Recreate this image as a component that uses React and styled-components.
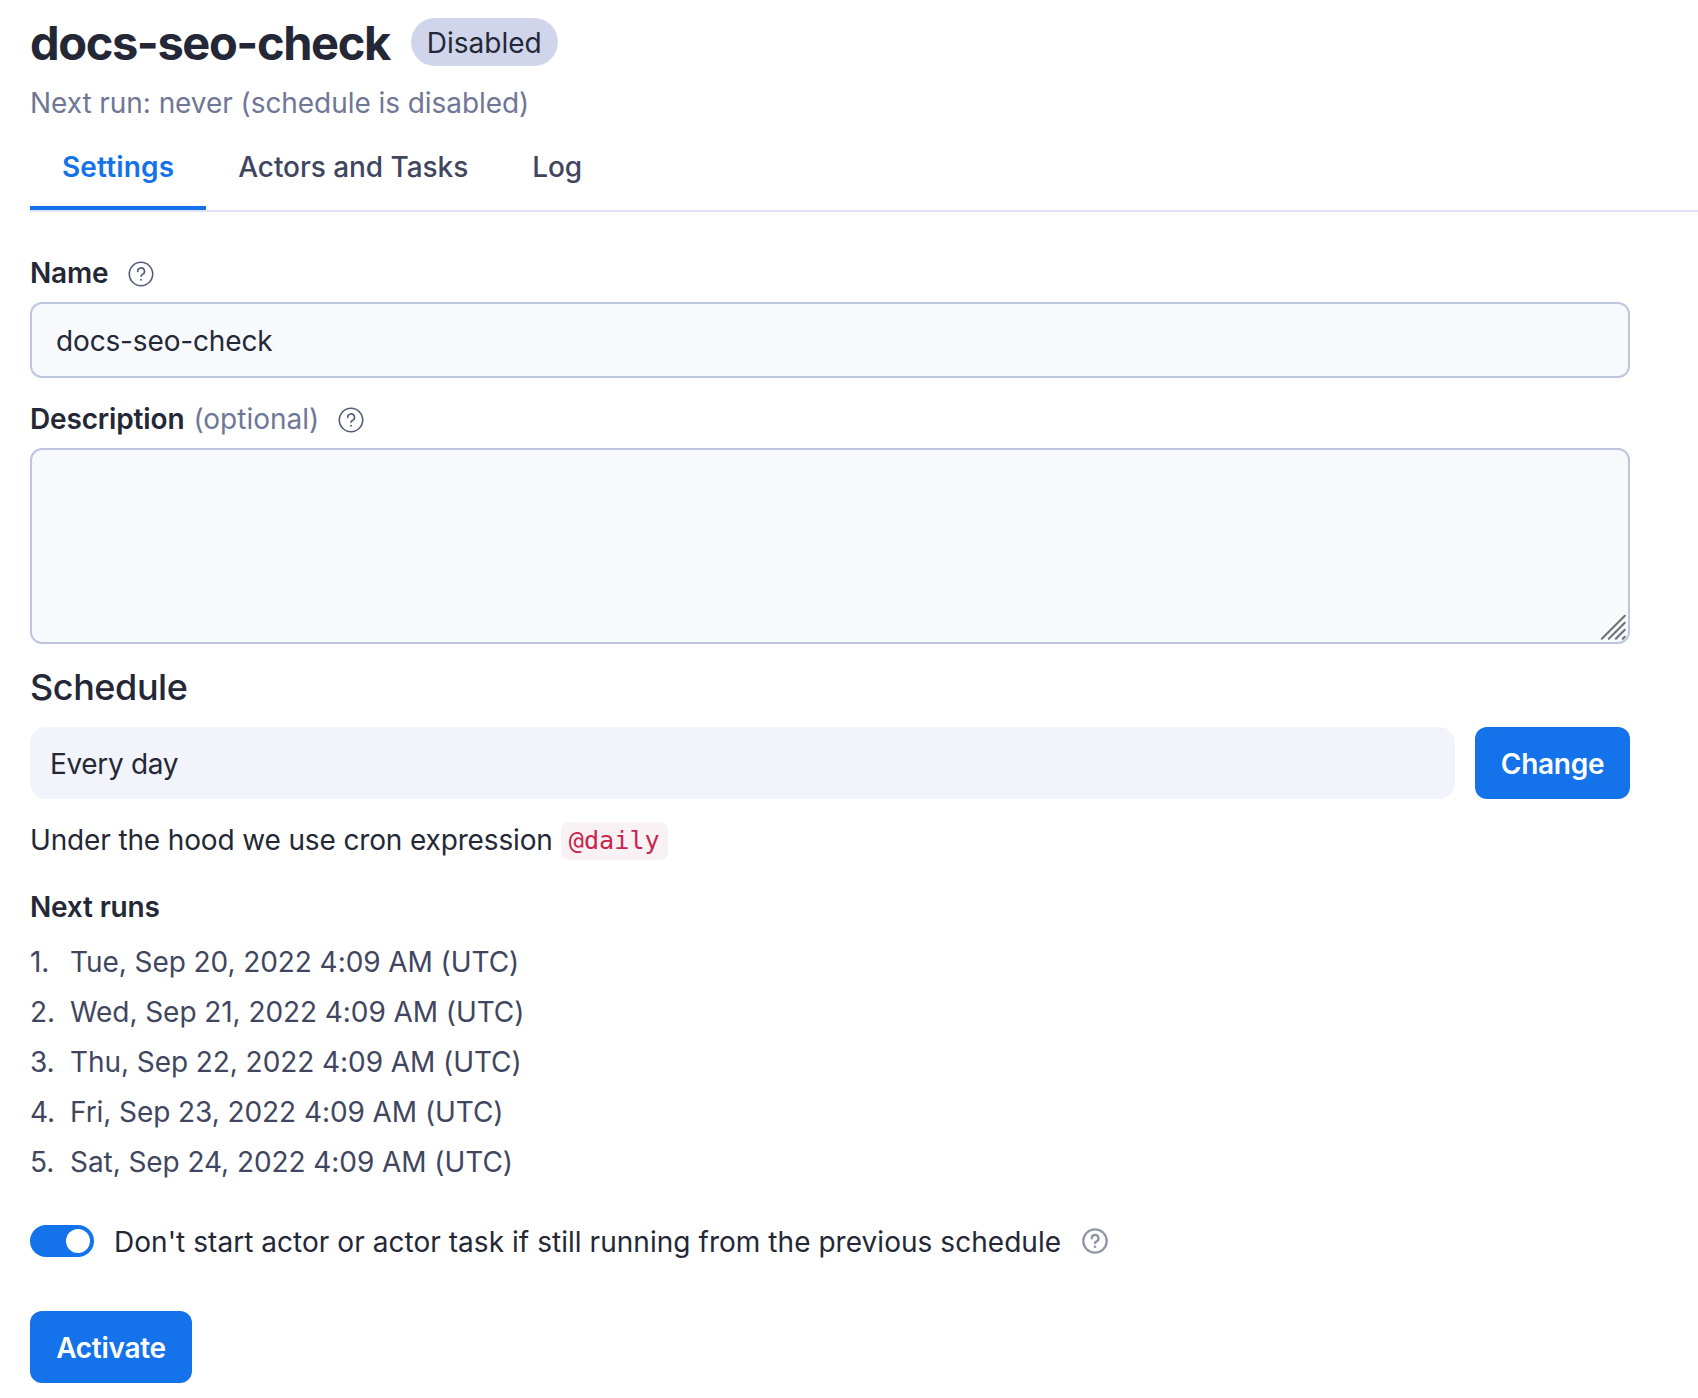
import React from "react";
import styled, { createGlobalStyle, css } from "styled-components";

const GlobalStyle = createGlobalStyle`
  *, *::before, *::after { box-sizing: border-box; }
  body {
    margin: 0;
    background: #fff;
    color: #242836;
    font-family: Inter, "Liberation Sans", sans-serif;
    font-size: 28px;
    line-height: 40px;
  }
`;

const Page = styled.main`
  display: flex;
  flex-direction: column;
  min-height: 1398px;
  padding: 18px 0 0 30px;
`;

const Header = styled.header`
  display: flex;
  align-items: center;
  gap: 21px;
  height: 48px;
`;

const Title = styled.h1`
  margin: 0;
  padding-top: 2px;
  font-size: 47px;
  line-height: 60px;
  font-weight: 700;
  letter-spacing: -1.4px;
`;

const Badge = styled.span`
  display: flex;
  align-items: center;
  height: 48px;
  padding: 2px 16px 0;
  border-radius: 24px;
  background: #d1d5eb;
`;

const Subtitle = styled.p`
  margin: 17px 0 0;
  color: #6f7696;
  letter-spacing: -0.06px;
`;

const Tabs = styled.nav`
  display: flex;
  margin-top: 4px;
  height: 85px;
  border-bottom: 2px solid #dfe2f5;
`;

const Tab = styled.button`
  display: flex;
  align-items: flex-start;
  padding: 20px 32px 0;
  border: 0;
  border-bottom: 4px solid ${({ $active }) => ($active ? "#1472eb" : "transparent")};
  background: none;
  color: ${({ $active }) => ($active ? "#1472eb" : "#414660")};
  font: inherit;
  font-weight: ${({ $active }) => ($active ? 600 : 500)};
  letter-spacing: ${({ $active }) => ($active ? "0.15px" : "-0.05px")};
`;

const Form = styled.form`
  display: flex;
  flex-direction: column;
  width: 1600px;
  margin-top: 41px;
`;

const Field = styled.div`
  display: flex;
  flex-direction: column;
  gap: 9px;
  margin-bottom: 21px;
`;

const Label = styled.label`
  display: flex;
  align-items: center;
  height: 40px;
  font-weight: 600;
  letter-spacing: -0.15px;
  svg { margin: 2px 0 0 19px; }
`;

const Optional = styled.span`
  margin-left: 9px;
  color: #6f7696;
  font-weight: 400;
  letter-spacing: 0;
`;

const control = css`
  display: block;
  width: 100%;
  padding: 2px 24px 0;
  border: 2px solid #bec5df;
  border-radius: 12px;
  background: #f8f9fd;
  color: inherit;
  font: inherit;
  letter-spacing: -0.15px;
  outline: 0;
`;

const TextInput = styled.input`
  ${control}
  height: 76px;
`;

const TextArea = styled.textarea`
  ${control}
  height: 196px;
  resize: none;
`;

const AreaWrap = styled.div`
  position: relative;
`;

const Grip = styled.svg`
  position: absolute;
  right: 4px;
  bottom: 4px;
  width: 26px;
  height: 26px;
`;

const SectionTitle = styled.h2`
  margin: 0 0 18px;
  font-size: 36px;
  line-height: 44px;
  font-weight: 500;
  letter-spacing: -0.44px;
`;

const ScheduleRow = styled.div`
  display: flex;
  gap: 20px;
`;

const ScheduleValue = styled.div`
  flex: 1;
  display: flex;
  align-items: center;
  height: 72px;
  padding: 2px 20px 0;
  border-radius: 16px;
  background: #f2f3fb;
  letter-spacing: -0.33px;
`;

const Button = styled.button`
  width: ${({ $width }) => $width}px;
  height: 72px;
  padding: 2px 0 0;
  border: 0;
  border-radius: 12px;
  background: #1472eb;
  color: #fff;
  font: inherit;
  font-weight: 600;
  letter-spacing: -0.28px;
`;

const CronNote = styled.p`
  display: flex;
  align-items: center;
  gap: 8px;
  height: 40px;
  margin: 21px 0 27px;
  letter-spacing: -0.14px;
`;

const Code = styled.code`
  margin-top: 2px;
  padding: 0 8px;
  border-radius: 8px;
  background: #f9f2f4;
  color: #c7254e;
  font-family: "DejaVu Sans Mono", monospace;
  font-size: 25.2px;
  line-height: 38px;
  letter-spacing: 0;
`;

const RunsTitle = styled.h3`
  margin: 0 0 10px;
  font-size: 28px;
  line-height: 40px;
  font-weight: 600;
  letter-spacing: -0.18px;
`;

const Runs = styled.ol`
  margin: 0;
  padding: 0;
  list-style: none;
  color: #414660;
  letter-spacing: -0.07px;
`;

const Run = styled.li`
  display: grid;
  grid-template-columns: 40px 1fr;
  line-height: 50px;
`;

const ToggleRow = styled.div`
  display: flex;
  align-items: center;
  height: 40px;
  margin: 34px 0 50px;
  letter-spacing: 0.043px;
  svg { margin-left: 21px; }
`;

const ToggleLabel = styled.span`
  padding-top: 2px;
`;

const Toggle = styled.span`
  display: flex;
  justify-content: flex-end;
  width: 64px;
  height: 32px;
  margin-right: 20px;
  padding: 4px;
  border-radius: 16px;
  background: #1472eb;
`;

const Knob = styled.span`
  width: 24px;
  height: 24px;
  border-radius: 50%;
  background: #fff;
`;

function HelpIcon({ color = "#555b78", stroke = 1.6 }) {
  return (
    <svg width="26" height="26" viewBox="0 0 26 26" fill="none" stroke={color} strokeWidth={stroke} strokeLinecap="round">
      <circle cx="13" cy="13" r="11.7" />
      <path d="M9.7 10.4a3.4 3.4 0 1 1 4.9 3c-1.1.5-1.6 1-1.6 1.8" />
      <circle cx="13" cy="18.8" r={stroke / 2 + 0.15} fill={color} stroke="none" />
    </svg>
  );
}

const runs = [
  "Tue, Sep 20, 2022 4:09 AM (UTC)",
  "Wed, Sep 21, 2022 4:09 AM (UTC)",
  "Thu, Sep 22, 2022 4:09 AM (UTC)",
  "Fri, Sep 23, 2022 4:09 AM (UTC)",
  "Sat, Sep 24, 2022 4:09 AM (UTC)",
];

export default function App() {
  return (
    <Page>
      <GlobalStyle />
      <Header>
        <Title>docs-seo-check</Title>
        <Badge>Disabled</Badge>
      </Header>
      <Subtitle>Next run: never (schedule is disabled)</Subtitle>
      <Tabs>
        <Tab $active>Settings</Tab>
        <Tab>Actors and Tasks</Tab>
        <Tab>Log</Tab>
      </Tabs>
      <Form>
        <Field>
          <Label>Name<HelpIcon /></Label>
          <TextInput defaultValue="docs-seo-check" />
        </Field>
        <Field>
          <Label>Description<Optional>(optional)</Optional><HelpIcon /></Label>
          <AreaWrap>
            <TextArea />
            <Grip viewBox="0 0 26 26" fill="none" stroke="#6e7074" strokeWidth="2" strokeLinecap="round">
              <path d="M1.8 24.8 24.8 1.8M8.8 24.8 24.8 8.8M15.8 24.8 24.8 15.8M22.8 24.8 24.8 22.8" />
            </Grip>
          </AreaWrap>
        </Field>
        <SectionTitle>Schedule</SectionTitle>
        <ScheduleRow>
          <ScheduleValue>Every day</ScheduleValue>
          <Button type="button" $width={155}>Change</Button>
        </ScheduleRow>
        <CronNote>Under the hood we use cron expression <Code>@daily</Code></CronNote>
        <RunsTitle>Next runs</RunsTitle>
        <Runs>
          {runs.map((run, i) => (
            <Run key={run}><span>{i + 1}.</span><span>{run}</span></Run>
          ))}
        </Runs>
        <ToggleRow>
          <Toggle><Knob /></Toggle>
          <ToggleLabel>Don't start actor or actor task if still running from the previous schedule</ToggleLabel>
          <HelpIcon color="#8f96a8" stroke={2.3} />
        </ToggleRow>
        <Button type="button" $width={162}>Activate</Button>
      </Form>
    </Page>
  );
}
